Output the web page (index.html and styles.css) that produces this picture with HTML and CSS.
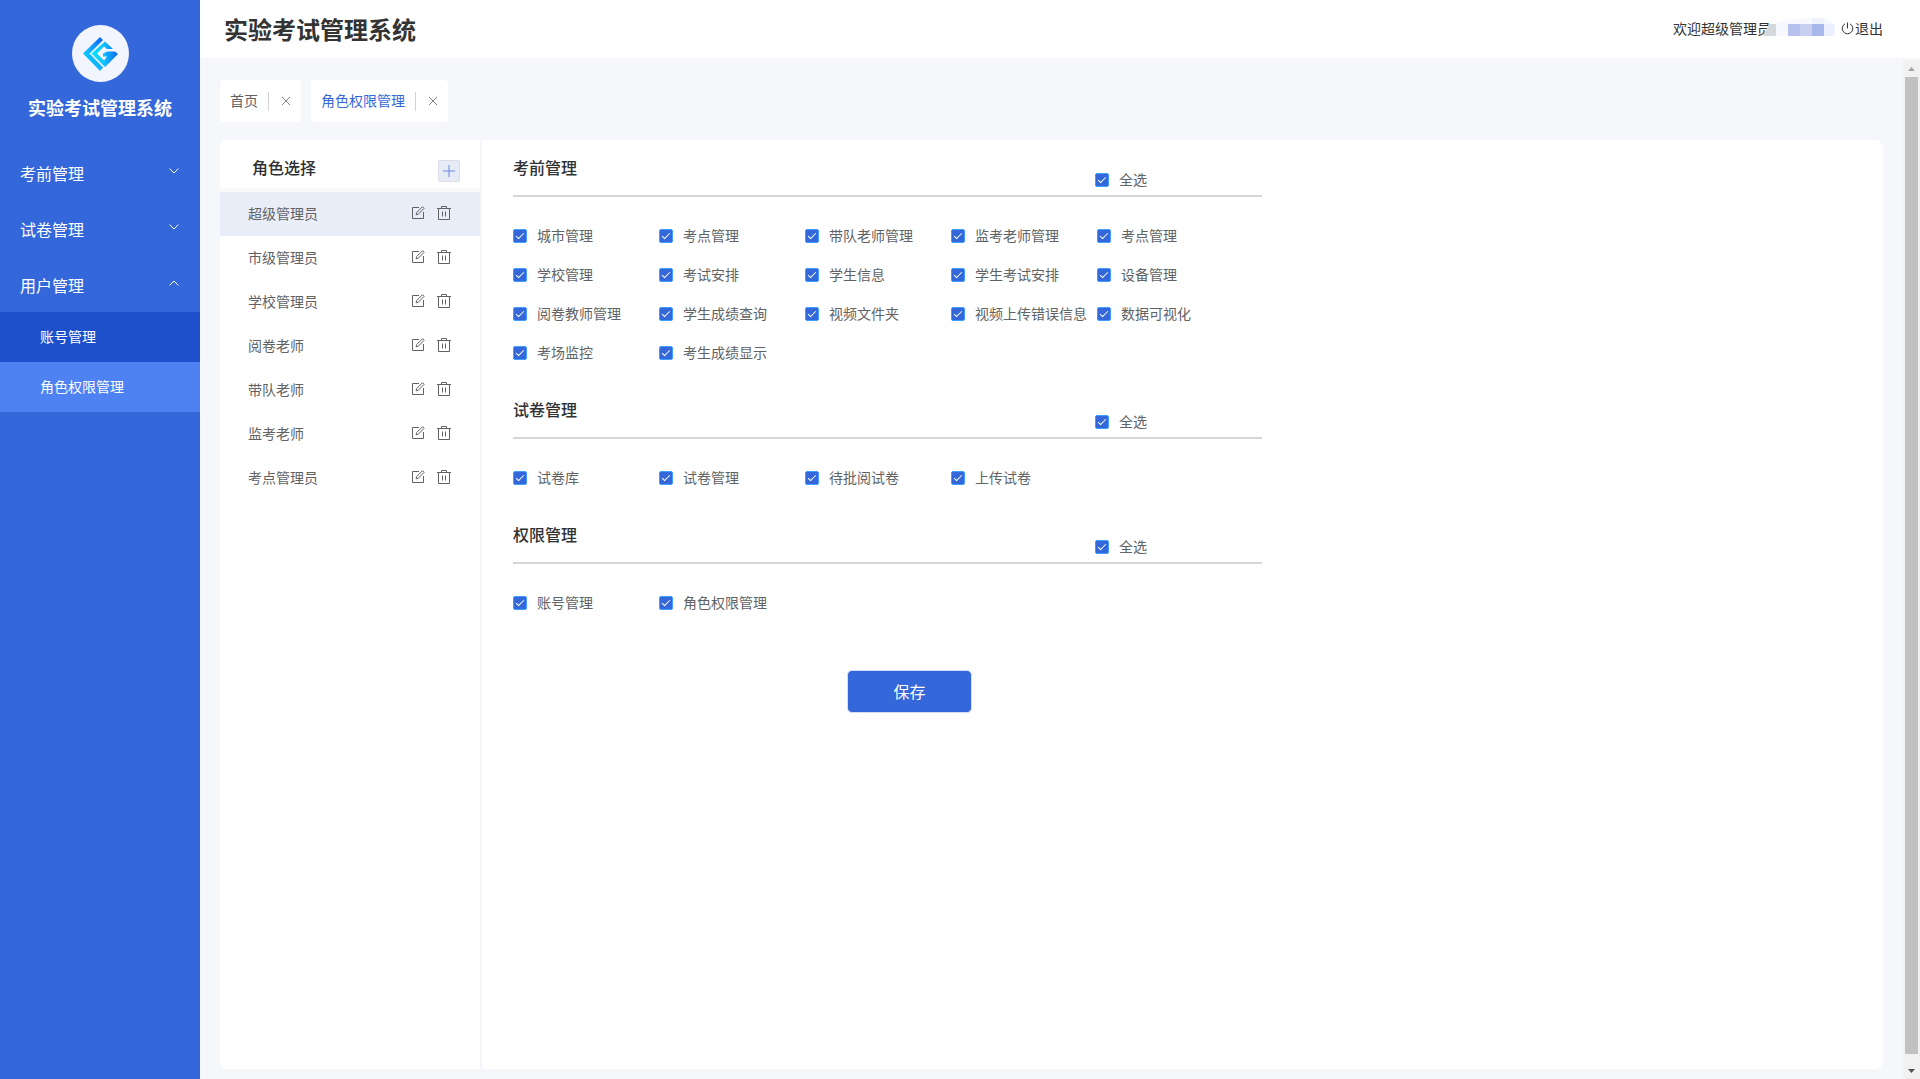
FILE: index.html
```html
<!DOCTYPE html>
<html lang="zh-CN">
<head>
<meta charset="utf-8">
<meta name="viewport" content="width=device-width, initial-scale=1">
<title>实验考试管理系统</title>
<link rel="stylesheet" href="styles.css">
</head>
<body>
<svg width="0" height="0" class="sprite" aria-hidden="true">
  <symbol id="down" viewBox="0 0 10 6"><path d="M.6.6 5 5 9.4.6"/></symbol>
  <symbol id="up" viewBox="0 0 10 6"><path d="M.6 5.4 5 1l4.400 4.400"/></symbol>
  <symbol id="close" viewBox="0 0 10 10"><path d="m1 1 8 8M9 1 1 9"/></symbol>
  <symbol id="edit" viewBox="0 0 14 14"><path d="M8 1.500H1.500v11h11V6M11.500.7l1.600 1.600-5.700 5.900-2.300.6.6-2.300z"/></symbol>
  <symbol id="trash" viewBox="0 0 14 14"><path d="M0 2.500h14M4.500 2.500v-2h5v2M1.500 2.500v11h11v-11M5.500 5.500v5M8.500 5.500v5"/></symbol>
</svg>
<div class="app">
  <aside class="sidebar">
    <div class="brand">
      <svg class="logo" viewBox="0 0 57 57" role="img" aria-label="logo">
        <defs>
          <linearGradient id="g1" x1="0" y1="1" x2="1" y2="0"><stop offset="0" stop-color="#00e6ff"/><stop offset=".45" stop-color="#12b4fd"/><stop offset="1" stop-color="#0a5cf5"/></linearGradient>
          <linearGradient id="g2" x1="0" y1="0" x2="1" y2="0"><stop offset="0" stop-color="#00e9ff"/><stop offset=".5" stop-color="#12bdfd"/><stop offset="1" stop-color="#0866f5"/></linearGradient>
        </defs>
        <circle cx="28.500" cy="28.500" r="28.500" fill="#f2f5fd"/>
        <path fill="url(#g1)" d="M28 12 31 15 17.500 28.500 31 42.500 28 46 11 28.500z"/>
        <path fill="url(#g2)" d="M33 16.500 41 24H35l-3-2.500-7 7 7 7 3-4h-4v-3l4-2h8l3 2.500-13 13-13.500-13.500z"/>
      </svg>
      <strong class="brand-name">实验考试管理系统</strong>
    </div>
    <nav class="menu">
      <button class="menu-item" type="button" aria-expanded="false">考前管理<svg class="arrow"><use href="#down"/></svg></button>
      <button class="menu-item" type="button" aria-expanded="false">试卷管理<svg class="arrow"><use href="#down"/></svg></button>
      <button class="menu-item" type="button" aria-expanded="true">用户管理<svg class="arrow"><use href="#up"/></svg></button>
      <a class="sub-item" href="#account">账号管理</a>
      <a class="sub-item current" href="#role">角色权限管理</a>
    </nav>
  </aside>
  <div class="main">
    <header class="topbar">
      <h1 class="title">实验考试管理系统</h1>
      <div class="user">
        <span>欢迎超级管理员</span>
        <svg class="masked" viewBox="0 0 72 18" aria-hidden="true">
          <path fill="#d6d9dc" d="M0 18 6 6h7v12z"/>
          <path fill="#f7f8fe" d="M13 6h12v12H13z"/>
          <path fill="#f8f9fe" d="m13 5 12-4v5H13z"/>
          <path fill="#f8f9fe" d="M25 1 49 0v6H25z"/>
          <path fill="#edf2fd" d="M49 0h12v6H49z"/>
          <path fill="#f5f8fe" d="M61 0l11 6H61z"/>
          <path fill="#b6c2ed" d="M25 6h12v12H25z"/>
          <path fill="#c9cff0" d="M37 6h12v12H37z"/>
          <path fill="#a9b8ea" d="M49 6h12v12H49z"/>
          <path fill="#eaf0fd" d="M61 6h10l1 3v6l-2 3h-9z"/>
        </svg>
        <a class="logout" href="#logout"><svg class="power" viewBox="0 0 13 13"><path d="M6.500.5v6M4 1.800a5.300 5.300 0 1 0 5 0"/></svg>退出</a>
      </div>
    </header>
    <div class="viewport">
      <div class="content">
        <div class="tabs">
          <div class="tab"><a href="#home">首页</a><button type="button" class="tab-close" aria-label="关闭"><svg class="x"><use href="#close"/></svg></button></div>
          <div class="tab active"><a href="#role">角色权限管理</a><button type="button" class="tab-close" aria-label="关闭"><svg class="x"><use href="#close"/></svg></button></div>
        </div>
        <main class="card">
          <section class="roles">
            <div class="roles-head"><h2>角色选择</h2><button type="button" class="add" aria-label="新增"><svg class="plus" viewBox="0 0 12 12"><path d="M6 0v12M0 6h12"/></svg></button></div>
            <ul class="role-list">
              <li class="role selected"><span>超级管理员</span><button type="button" aria-label="编辑"><svg class="ico"><use href="#edit"/></svg></button><button type="button" aria-label="删除"><svg class="ico"><use href="#trash"/></svg></button></li>
              <li class="role"><span>市级管理员</span><button type="button" aria-label="编辑"><svg class="ico"><use href="#edit"/></svg></button><button type="button" aria-label="删除"><svg class="ico"><use href="#trash"/></svg></button></li>
              <li class="role"><span>学校管理员</span><button type="button" aria-label="编辑"><svg class="ico"><use href="#edit"/></svg></button><button type="button" aria-label="删除"><svg class="ico"><use href="#trash"/></svg></button></li>
              <li class="role"><span>阅卷老师</span><button type="button" aria-label="编辑"><svg class="ico"><use href="#edit"/></svg></button><button type="button" aria-label="删除"><svg class="ico"><use href="#trash"/></svg></button></li>
              <li class="role"><span>带队老师</span><button type="button" aria-label="编辑"><svg class="ico"><use href="#edit"/></svg></button><button type="button" aria-label="删除"><svg class="ico"><use href="#trash"/></svg></button></li>
              <li class="role"><span>监考老师</span><button type="button" aria-label="编辑"><svg class="ico"><use href="#edit"/></svg></button><button type="button" aria-label="删除"><svg class="ico"><use href="#trash"/></svg></button></li>
              <li class="role"><span>考点管理员</span><button type="button" aria-label="编辑"><svg class="ico"><use href="#edit"/></svg></button><button type="button" aria-label="删除"><svg class="ico"><use href="#trash"/></svg></button></li>
            </ul>
          </section>
          <form class="perms">
            <section class="group">
              <div class="group-head"><h2>考前管理</h2><label class="check all"><input type="checkbox" checked>全选</label></div>
              <div class="options">
                <label class="check"><input type="checkbox" checked>城市管理</label>
                <label class="check"><input type="checkbox" checked>考点管理</label>
                <label class="check"><input type="checkbox" checked>带队老师管理</label>
                <label class="check"><input type="checkbox" checked>监考老师管理</label>
                <label class="check"><input type="checkbox" checked>考点管理</label>
                <label class="check"><input type="checkbox" checked>学校管理</label>
                <label class="check"><input type="checkbox" checked>考试安排</label>
                <label class="check"><input type="checkbox" checked>学生信息</label>
                <label class="check"><input type="checkbox" checked>学生考试安排</label>
                <label class="check"><input type="checkbox" checked>设备管理</label>
                <label class="check"><input type="checkbox" checked>阅卷教师管理</label>
                <label class="check"><input type="checkbox" checked>学生成绩查询</label>
                <label class="check"><input type="checkbox" checked>视频文件夹</label>
                <label class="check"><input type="checkbox" checked>视频上传错误信息</label>
                <label class="check"><input type="checkbox" checked>数据可视化</label>
                <label class="check"><input type="checkbox" checked>考场监控</label>
                <label class="check"><input type="checkbox" checked>考生成绩显示</label>
              </div>
            </section>
            <section class="group">
              <div class="group-head"><h2>试卷管理</h2><label class="check all"><input type="checkbox" checked>全选</label></div>
              <div class="options">
                <label class="check"><input type="checkbox" checked>试卷库</label>
                <label class="check"><input type="checkbox" checked>试卷管理</label>
                <label class="check"><input type="checkbox" checked>待批阅试卷</label>
                <label class="check"><input type="checkbox" checked>上传试卷</label>
              </div>
            </section>
            <section class="group">
              <div class="group-head"><h2>权限管理</h2><label class="check all"><input type="checkbox" checked>全选</label></div>
              <div class="options">
                <label class="check"><input type="checkbox" checked>账号管理</label>
                <label class="check"><input type="checkbox" checked>角色权限管理</label>
              </div>
            </section>
            <button type="button" class="save">保存</button>
          </form>
        </main>
      </div>
      <div class="scrollbar" aria-hidden="true">
        <svg class="cap" viewBox="0 0 17 17"><path fill="#a3a3a3" d="M5 11h7L8.500 7z"/></svg>
        <div class="thumb"></div>
        <svg class="cap" viewBox="0 0 17 17"><path fill="#505050" d="M5 7h7l-3.500 4z"/></svg>
      </div>
    </div>
  </div>
</div>
</body>
</html>
```
FILE: styles.css
```css
* { box-sizing: border-box; }
body {
  margin: 0;
  font: 14px/20px "Noto Sans CJK SC", sans-serif;
  color: #606266;
  background: #f5f7fb;
}
h1, h2, ul { margin: 0; padding: 0; }
button { font: inherit; color: inherit; background: none; border: 0; padding: 0; cursor: pointer; }
a { color: inherit; text-decoration: none; }
svg { display: block; flex: none; fill: none; stroke: none; }
symbol path { fill: none; stroke: currentColor; }
.sprite { position: absolute; }

.app { display: flex; min-height: 100vh; }

/* sidebar */
.sidebar { flex: none; width: 200px; background: #3467d9; color: #fff; }
.brand { display: flex; flex-direction: column; align-items: center; gap: 11px; height: 144px; padding-top: 25px; }
.logo { width: 57px; height: 57px; }
.brand-name { font-size: 18px; line-height: 28px; }
.menu { display: flex; flex-direction: column; }
.menu-item {
  display: flex; align-items: center; justify-content: space-between;
  height: 56px; padding: 2px 21px 0 20px; font-size: 16px;
}
.arrow { width: 10px; height: 6px; margin-bottom: 4px; }
.sub-item { padding: 14px 40px 16px; background: #1f50cb; }
.sub-item.current { background: #4e81f2; }

/* header */
.main { flex: 1; min-width: 0; display: flex; flex-direction: column; }
.topbar {
  display: flex; align-items: center; justify-content: space-between;
  height: 58px; padding: 0 37px 0 24px; background: #fff; color: #333;
}
.title { font-size: 24px; line-height: 32px; }
.user { display: flex; align-items: center; padding-bottom: 2px; }
.masked { width: 72px; height: 18px; margin-left: -8px; margin-bottom: 2px; }
.logout { display: flex; align-items: center; gap: 1px; margin-left: 6px; }
.power { width: 13px; height: 13px; stroke: #333; }

.viewport { flex: 1; display: flex; padding-top: 2px; }
.content { flex: 1; min-width: 0; display: flex; flex-direction: column; padding: 20px 20px 10px; }

/* open pages */
.tabs { display: flex; gap: 10px; margin-bottom: 18px; }
.tab { display: flex; align-items: center; height: 42px; padding: 0 10px; background: #fff; border-radius: 4px; }
.tab a { padding-bottom: 2px; }
.active { color: #3467d9; }
.tab-close { display: flex; align-items: center; height: 19px; margin-left: 10px; padding-left: 12px; border-left: 1px solid #d0d2d6; color: #808286; }
.x { width: 10px; height: 10px; }

/* card */
.card { flex: 1; display: flex; background: #fff; border-radius: 8px; overflow: hidden; }
h2 { font-size: 16px; line-height: 24px; font-weight: 500; color: #303133; }
.roles { flex: none; width: 262px; border-right: 2px solid #f5f6fa; }
.roles-head {
  display: flex; align-items: flex-start; justify-content: space-between;
  height: 52px; padding: 15px 20px 0 32px; border-bottom: 4px solid #f9f9fa;
}
.add { display: grid; place-items: center; width: 22px; height: 22px; margin-top: 5px; background: #e7ebf5; border: 1px solid #d9dde6; border-radius: 2px; }
.plus { width: 12px; height: 12px; stroke: #6a84e0; }
.role-list { list-style: none; }
.role { display: flex; align-items: center; gap: 12px; height: 44px; padding: 0 29px 2px 28px; }
.role span { flex: 1; }
.selected { background: #e9edf7; }
.ico { width: 14px; height: 14px; }

/* permissions */
.perms { flex: 1; padding: 0 31px; }
.group { max-width: 749px; margin-bottom: 11px; }
.group-head {
  display: flex; justify-content: space-between; height: 57px;
  padding: 15px 93px 0 0; border-bottom: 2px solid #d6d6d6;
}
.options { display: grid; grid-template-columns: repeat(5, 146px); grid-auto-rows: 39px; padding-top: 18px; }
.check { display: flex; align-items: center; gap: 10px; white-space: nowrap; }
.all { align-self: flex-start; margin-top: 14px; margin-right: 22px; }
.check input {
  appearance: none; display: grid; justify-content: center; flex: none;
  width: 14px; height: 14px; margin: 2px 0 0; padding-top: 1px;
  border: 1px solid #409eff; border-radius: 2px;
}
.check input:checked { background: #3467d9; }
.check input:checked::after {
  content: ""; width: 3px; height: 7px;
  border: solid #fff; border-width: 0 1px 1px 0; transform: rotate(45deg);
}
.save {
  display: block; width: 125px; height: 43px; margin: 49px 0 0 334px; padding-bottom: 2px;
  background: #3467d9; border: 1px solid #d3dcf3; border-radius: 5px; color: #fff; font-size: 16px;
}

/* scroll track */
.scrollbar { flex: none; display: flex; flex-direction: column; width: 17px; background: #f1f1f1; }
.cap { width: 17px; height: 17px; }
.thumb { flex: 1; margin: 0 2px 8px; background: #c1c1c1; }
```
